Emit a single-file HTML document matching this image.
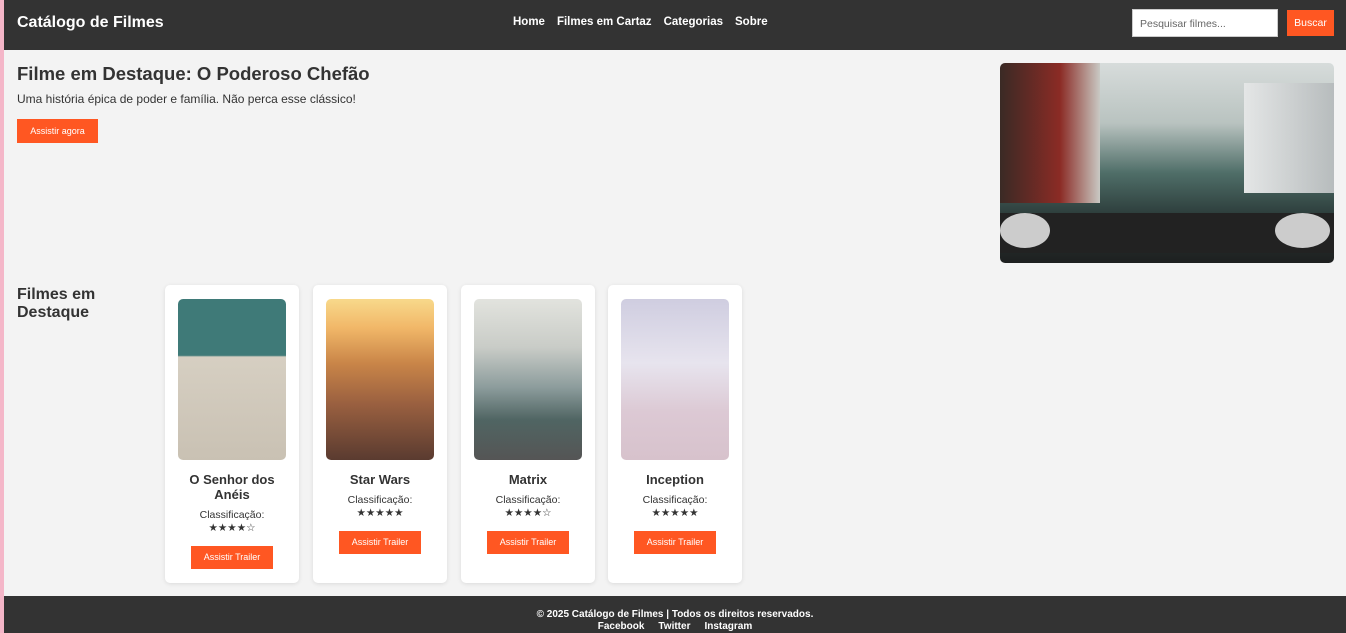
<!DOCTYPE html>
<html><head><meta charset="utf-8"><style>
*{margin:0;padding:0;box-sizing:border-box}
body{width:1346px;height:633px;overflow:hidden;background:#f3f3f3;font-family:"Liberation Sans",Arial,sans-serif;color:#333;position:relative}
.pink{position:absolute;left:0;top:0;width:4px;height:633px;background:#f4b6c8;z-index:5}
header{position:absolute;left:4px;top:0;width:1342px;height:50px;background:#333;color:#fff}
header h1{position:absolute;left:13px;top:14px;font-size:16px;font-weight:bold}
nav{position:absolute;left:509px;top:16px;font-size:11.5px;font-weight:bold}
nav span{margin-right:12px}
.search{position:absolute;left:1128px;top:9px;width:146px;height:28px;background:#fff;border:1px solid #ccc;font-size:10.5px;color:#666;padding:8px 7px}
.buscar{position:absolute;left:1283px;top:10px;width:47px;height:26px;background:#ff5722;color:#fff;font-size:10.5px;text-align:center;line-height:26px}
.hero h2{position:absolute;left:17px;top:63px;font-size:18.5px;font-weight:bold}
.hero p{position:absolute;left:17px;top:92px;font-size:12px}
.btn{background:#ff5722;color:#fff;font-size:9px;text-align:center;position:absolute}
.heroimg{position:absolute;left:1000px;top:63px;width:334px;height:200px;border-radius:5px;overflow:hidden;background:linear-gradient(180deg,#d7dcdb 0%,#b9c3c0 30%,#4f6e68 55%,#2e3f3d 75%,#1d1f1f 100%)}
.sec{position:absolute;left:17px;top:286px;font-size:16px;font-weight:bold;line-height:18px}
.card{position:absolute;top:285px;width:134px;height:298px;background:#fff;border-radius:5px;box-shadow:0 1px 4px rgba(0,0,0,.1);text-align:center}
.card .img{position:absolute;left:13px;top:14px;width:108px;height:161px;border-radius:5px}
.card h3{position:absolute;left:0;width:134px;top:187px;font-size:13px;line-height:15px;padding:0 18px}
.card .c{position:absolute;left:0;width:134px;font-size:10.5px;line-height:13px}
footer{position:absolute;left:4px;top:596px;width:1342px;height:37px;background:#333;color:#fff;text-align:center;font-size:10px;font-weight:bold;line-height:12px;padding-top:13px}
footer span{margin:0 7px}
</style></head><body>
<div class="pink"></div>
<header><h1>Catálogo de Filmes</h1>
<nav><span>Home</span><span>Filmes em Cartaz</span><span>Categorias</span><span>Sobre</span></nav>
<div class="search">Pesquisar filmes...</div><div class="buscar">Buscar</div></header>
<div class="hero"><h2>Filme em Destaque: O Poderoso Chefão</h2><p>Uma história épica de poder e família. Não perca esse clássico!</p>
<div class="btn" style="left:17px;top:119px;width:81px;height:24px;line-height:24px">Assistir agora</div></div>
<div class="heroimg">
<div style="position:absolute;left:0;top:0;width:100px;height:140px;background:linear-gradient(90deg,#3a2a25,#8b2b25 60%,#c9c9c4)"></div>
<div style="position:absolute;right:0;top:20px;width:90px;height:110px;background:linear-gradient(90deg,#e4e6e6,#b7bcbd)"></div>
<div style="position:absolute;left:0;top:150px;width:334px;height:40px;background:#222"></div>
<div style="position:absolute;left:0;top:150px;width:50px;height:35px;border-radius:50%;background:#ccc"></div>
<div style="position:absolute;left:275px;top:150px;width:55px;height:35px;border-radius:50%;background:#ccc"></div>
</div>
<div class="sec">Filmes em<br>Destaque</div>
<div class="card" style="left:165px"><div class="img" style="background:linear-gradient(180deg,#3f7a78 0%,#3f7a78 35%,#d6cfc2 36%,#c9c1b3 100%)"></div><h3>O Senhor dos Anéis</h3><div class="c" style="top:224px">Classificação:<br>★★★★☆</div><div class="btn" style="left:26px;top:261px;width:82px;height:23px;line-height:23px">Assistir Trailer</div></div>
<div class="card" style="left:313px"><div class="img" style="background:linear-gradient(180deg,#f8d98b 0%,#f1b768 18%,#c98548 40%,#9a6040 65%,#5a3b30 100%)"></div><h3>Star Wars</h3><div class="c" style="top:209px">Classificação:<br>★★★★★</div><div class="btn" style="left:26px;top:246px;width:82px;height:23px;line-height:23px">Assistir Trailer</div></div>
<div class="card" style="left:461px"><div class="img" style="background:linear-gradient(180deg,#e2e3de 0%,#c9ccc7 30%,#8c9c9c 55%,#506563 75%,#555 100%)"></div><h3>Matrix</h3><div class="c" style="top:209px">Classificação:<br>★★★★☆</div><div class="btn" style="left:26px;top:246px;width:82px;height:23px;line-height:23px">Assistir Trailer</div></div>
<div class="card" style="left:608px"><div class="img" style="background:linear-gradient(180deg,#cfcde0 0%,#e7e4ee 40%,#dcc9d4 70%,#d7c2cc 100%)"></div><h3>Inception</h3><div class="c" style="top:209px">Classificação:<br>★★★★★</div><div class="btn" style="left:26px;top:246px;width:82px;height:23px;line-height:23px">Assistir Trailer</div></div>
<footer>© 2025 Catálogo de Filmes | Todos os direitos reservados.<br><span>Facebook</span><span>Twitter</span><span>Instagram</span></footer>
</body></html>
